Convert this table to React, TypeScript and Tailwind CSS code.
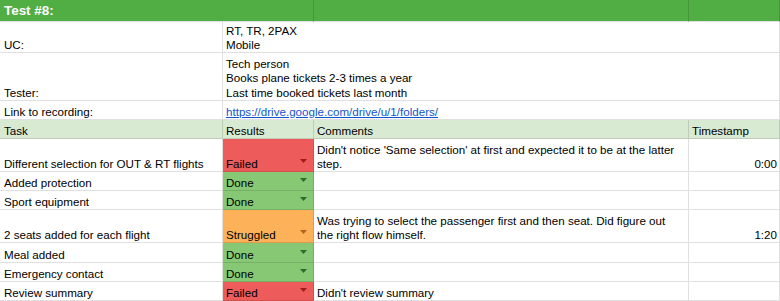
import React from "react";

const base =
  "border-b border-r border-black/[0.12] flex items-end overflow-hidden whitespace-nowrap";

type Status = "Failed" | "Done" | "Struggled";

const statusStyle: Record<Status, { bg: string; arrow: string }> = {
  Failed: { bg: "bg-[#ee5b5b]", arrow: "#9e1c1c" },
  Done: { bg: "bg-[#86c874]", arrow: "#2f6a2a" },
  Struggled: { bg: "bg-[#fdb158]", arrow: "#b0641c" },
};

function StatusCell({ s }: { s: Status }) {
  const st = statusStyle[s];
  return (
    <div className={`${base} ${st.bg} pl-[3px] pr-[6px] justify-between`}>
      <span>{s}</span>
      <svg width="7" height="4" viewBox="0 0 7 4" className="mb-[8px]">
        <path d="M0 0 L7 0 L3.5 4 Z" fill={st.arrow} />
      </svg>
    </div>
  );
}

const rows: {
  task: string;
  status: Status;
  comment?: string[];
  time?: string;
}[] = [
  {
    task: "Different selection for OUT & RT flights",
    status: "Failed",
    comment: [
      "Didn't notice 'Same selection' at first and expected it to be at the latter",
      "step.",
    ],
    time: "0:00",
  },
  { task: "Added protection", status: "Done" },
  { task: "Sport equipment", status: "Done" },
  {
    task: "2 seats added for each flight",
    status: "Struggled",
    comment: [
      "Was trying to select the passenger first and then seat. Did figure out",
      "the right flow himself.",
    ],
    time: "1:20",
  },
  { task: "Meal added", status: "Done" },
  { task: "Emergency contact", status: "Done" },
  { task: "Review summary", status: "Failed", comment: ["Didn't review summary"] },
];

export default function App() {
  return (
    <div className="w-[780px] h-[301px] overflow-hidden bg-white font-['Liberation_Sans',Arial,sans-serif] text-[11.6px] leading-[14px] text-black">
      <div className="grid grid-cols-[223px_91px_375px_91px] grid-rows-[22px_31px_48px_19px_19px_33px_19px_19px_33px_20px_19px_19px]">
        {/* Title row */}
        <div className="col-span-2 bg-[#51ae45] border-r border-b border-r-black/[0.13] border-b-[#e2e2e2] flex items-center pl-[4px] text-white font-bold text-[13.4px]">
          Test #8:
        </div>
        <div className="bg-[#51ae45] border-r border-b border-r-black/[0.13] border-b-[#e2e2e2]" />
        <div className="bg-[#51ae45] border-r border-b border-r-black/[0.13] border-b-[#e2e2e2]" />

        {/* UC */}
        <div className={`${base} pl-[4px]`}>UC:</div>
        <div className={`${base} col-span-3 pl-[3px]`}>
          <div className="flex flex-col">
            <span>RT, TR, 2PAX</span>
            <span>Mobile</span>
          </div>
        </div>

        {/* Tester */}
        <div className={`${base} pl-[4px]`}>Tester:</div>
        <div className={`${base} col-span-3 pl-[3px]`}>
          <div className="flex flex-col leading-[14.5px]">
            <span>Tech person</span>
            <span>Books plane tickets 2-3 times a year</span>
            <span>Last time booked tickets last month</span>
          </div>
        </div>

        {/* Link */}
        <div className={`${base} pl-[4px]`}>Link to recording:</div>
        <div className={`${base} col-span-3 pl-[3px]`}>
          <a
            href="#"
            className="text-[#1155cc] underline underline-offset-[1px]"
          >
            https://drive.google.com/drive/u/1/folders/
          </a>
        </div>

        {/* Table header */}
        <div className={`${base} bg-[#d9ead3] pl-[4px]`}>Task</div>
        <div className={`${base} bg-[#d9ead3] pl-[3px]`}>Results</div>
        <div className={`${base} bg-[#d9ead3] pl-[3px]`}>Comments</div>
        <div className={`${base} bg-[#d9ead3] pl-[3px]`}>Timestamp</div>

        {rows.map((r) => (
          <React.Fragment key={r.task}>
            <div className={`${base} pl-[4px]`}>{r.task}</div>
            <StatusCell s={r.status} />
            <div className={`${base} pl-[3px]`}>
              <div className="flex flex-col">
                {(r.comment ?? []).map((c) => (
                  <span key={c}>{c}</span>
                ))}
              </div>
            </div>
            <div className={`${base} justify-end pr-[2px]`}>{r.time ?? ""}</div>
          </React.Fragment>
        ))}
      </div>
    </div>
  );
}
